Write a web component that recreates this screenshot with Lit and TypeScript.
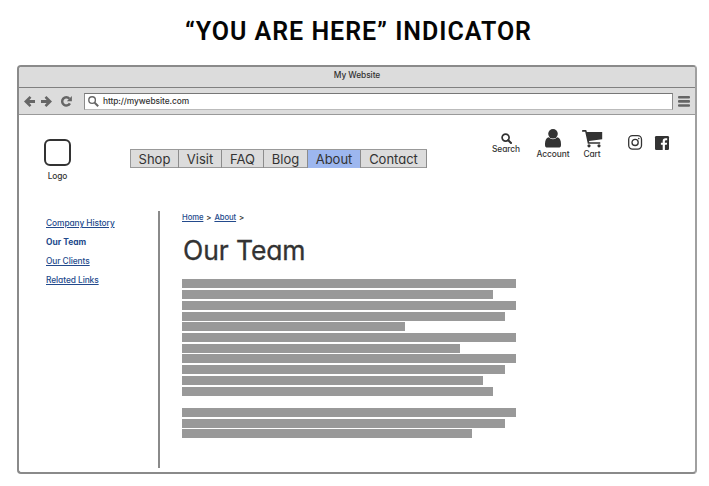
import { LitElement, html, css, svg } from "lit";
import { customElement } from "lit/decorators.js";
import { classMap } from "lit/directives/class-map.js";

const NAV = ["Shop", "Visit", "FAQ", "Blog", "About", "Contact"];
const SIDE = ["Company History", "Our Team", "Our Clients", "Related Links"];
const LINES = [334, 311, 334, 323, 223, 334, 278, 334, 323, 301, 311, 0, 334, 323, 290];

const arrow = svg`<path d="M0 5.5 5.6 0 7.4 1.8 5.4 3.9H11V7.1H5.4L7.4 9.2 5.6 11Z"/>`;

@customElement("app-root")
export class AppRoot extends LitElement {
  static styles = css`
    :host {
      display: flex;
      flex-direction: column;
      box-sizing: border-box;
      width: 709px;
      height: 486px;
      overflow: hidden;
      background: #fff;
      color: #333;
      font: 500 8.4px/12px Inter, "Liberation Sans", sans-serif;
      font-feature-settings: "cv11" 1;
      letter-spacing: -0.08px;
      white-space: nowrap;
    }
    * { box-sizing: border-box; }
    svg { display: block; overflow: visible; }
    .title {
      margin: 0;
      height: 65px;
      padding: 17px 0 0 185px;
      font: 600 25px/30px Roboto, sans-serif;
      letter-spacing: 0.98px;
      color: #050505;
    }
    .window {
      width: 680px;
      height: 409px;
      margin-left: 17px;
      border: 2px solid #8a8a8a;
      border-right-color: #a0a0a0;
      border-radius: 4px;
      overflow: hidden;
    }
    .bar {
      height: 21px;
      background: #dcdcdc;
      border-bottom: 1px solid #808080;
      text-align: center;
      line-height: 17px;
    }
    .tools {
      display: flex;
      align-items: center;
      height: 27px;
      padding: 0 5px;
      background: #dcdcdc;
      border-bottom: 1px solid #999;
      fill: #666;
    }
    .fwd { margin-left: 6px; transform: scaleX(-1); }
    .reload { margin-left: 9px; }
    .url {
      display: flex;
      align-items: center;
      width: 589px;
      height: 17px;
      margin: 0 5px 0 12px;
      padding-left: 3px;
      gap: 4px;
      background: #fff;
      border: 1px solid #8c8c8c;
      border-top-color: #777;
      border-bottom-color: #bbb;
    }
    .page { display: grid; grid-template-columns: 139px 1fr; grid-template-rows: 96px 1fr; height: 357px; }
    .head { grid-column: 1 / 3; display: flex; align-items: flex-start; }
    .logo { width: 27px; margin: 24px 0 0 25px; display: flex; flex-direction: column; align-items: center; gap: 4px; }
    .logobox { width: 27px; height: 27px; border: 2px solid #333; border-radius: 6px; }
    .nav {
      display: grid;
      grid-template-columns: 48px 43px 42px 44px 53px 66px;
      margin: 34px 0 0 59px;
      height: 19px;
      border: 1px solid #999;
      border-right: 0;
      background: #dcdcdc;
      font-size: 13px;
      font-weight: 400;
      letter-spacing: 0;
      line-height: 18px;
      text-align: center;
      width: 297px;
    }
    .tab { border-right: 1px solid #8c8c8c; }
    .tab.on { background: #9db7ef; }
    .action { display: flex; flex-direction: column; align-items: center; fill: #333; }
    .search { width: 30px; margin: 18px 0 0 64px; }
    .search span { margin-top: -1px; }
    .account { width: 34px; margin: 14px 0 0 15px; }
    .cart { width: 22px; margin: 15px 0 0 11px; }
    .insta { margin: 20px 0 0 25px; }
    .fb { margin: 21px 0 0 13px; }
    .side {
      display: flex;
      flex-direction: column;
      align-items: flex-start;
      height: 257px;
      width: 141px;
      padding: 6px 0 0 27px;
      gap: 7px;
      border-right: 2px solid #8a8a8a;
      color: #234a8c;
    }
    .link { color: #234a8c; text-decoration: underline; text-underline-offset: 1px; }
    .here { font-weight: 700; letter-spacing: 0.05px; }
    .main { padding-left: 24px; }
    .crumbs { display: flex; font-size: 7.7px; height: 13px; padding-top: 1px; }
    .sep { width: 11px; text-align: center; font-weight: 700; }
    .h { margin: 9px 0 0 1px; font-weight: 400; font-size: 26.5px; line-height: 34px; letter-spacing: -0.1px; -webkit-text-stroke: 0.3px #333; }
    .lines { display: grid; grid-auto-rows: 9px; row-gap: 1.73px; padding-top: 12.4px; }
    .line { background: #999; }
  `;

  render() {
    return html`
      <h1 class="title">“YOU ARE HERE” INDICATOR</h1>
      <div class="window">
        <div class="bar">My Website</div>
        <div class="tools">
          <svg width="11" height="11">${arrow}</svg>
          <svg class="fwd" width="11" height="11">${arrow}</svg>
          <svg class="reload" width="11" height="11" viewBox="0 0 11 11">
            <path d="M8.9 7.3A4.1 4.1 0 1 1 8.4 2.7" fill="none" stroke="#666" stroke-width="2.5"/>
            <path d="M10.9 0V5.2H5.8Z"/>
          </svg>
          <div class="url">
            <svg width="11" height="11" viewBox="0 0 11 11" fill="none" stroke="#666">
              <circle cx="4.1" cy="4.1" r="3.3" stroke-width="1.4"/>
              <path d="M6.7 6.7 10.2 10.2" stroke-width="2"/>
            </svg>
            <span>http://mywebsite.com</span>
          </div>
          <svg width="12" height="11"><rect width="12" height="2.6" rx="1"/><rect y="4.1" width="12" height="2.6" rx="1"/><rect y="8.2" width="12" height="2.6" rx="1"/></svg>
        </div>
        <div class="page">
          <div class="head">
            <div class="logo"><div class="logobox"></div><span>Logo</span></div>
            <nav class="nav">
              ${NAV.map((t) => html`<div class=${classMap({ tab: true, on: t === "About" })}>${t}</div>`)}
            </nav>
            <div class="action search">
              <svg width="11" height="11" viewBox="0 0 11 11" fill="none" stroke="#333">
                <circle cx="4.6" cy="4.6" r="3.5" stroke-width="1.7"/>
                <path d="M7.2 7.2 10 10" stroke-width="2.1" stroke-linecap="round"/>
              </svg>
              <span>Search</span>
            </div>
            <div class="action account">
              <svg width="16" height="19" viewBox="0 0 16 19">
                <circle cx="8" cy="4.8" r="4.8"/>
                <path d="M3.6 8.2Q8 12.4 12.4 8.2Q16 9.4 16 15V16Q16 18.6 13.5 18.6H2.5Q0 18.6 0 16V15Q0 9.4 3.6 8.2Z"/>
              </svg>
              <span>Account</span>
            </div>
            <div class="action cart">
              <svg width="21" height="18" viewBox="0 0 21 18">
                <path d="M0 .9Q0 .1.8.1H4.2L4.9 1.9H20.2V9.2L7 10.9 7.3 12.3H18.2V13.8H5.8L3.2 1.8H.8Q0 1.8 0 .9Z"/>
                <circle cx="7" cy="15.8" r="1.6"/><circle cx="17" cy="15.8" r="1.6"/>
              </svg>
              <span>Cart</span>
            </div>
            <svg class="insta" width="14" height="15" viewBox="0 0 14 15" fill="none" stroke="#333" stroke-width="1.3">
              <rect x=".7" y=".7" width="12.8" height="13.4" rx="3.8"/>
              <circle cx="7.1" cy="7.4" r="3.1"/>
              <circle cx="10.8" cy="3.6" r=".8" fill="#333" stroke="none"/>
            </svg>
            <svg class="fb" width="14" height="14" viewBox="0 0 14 14">
              <rect width="14" height="14" rx="1.2" fill="#333"/>
              <path d="M7.7 14V8.8H5.9V6.7H7.7V5.1Q7.7 2.3 10.5 2.3H12.2V4.3H11Q9.9 4.3 9.9 5.3V6.7H12.1L11.8 8.8H9.9V14Z" fill="#fff"/>
            </svg>
          </div>
          <div class="side">
            ${SIDE.map((t) => html`<span class=${t === "Our Team" ? "here" : "link"}>${t}</span>`)}
          </div>
          <div class="main">
            <div class="crumbs"><span class="link">Home</span><span class="sep">&gt;</span><span class="link">About</span><span class="sep">&gt;</span></div>
            <h2 class="h">Our Team</h2>
            <div class="lines">${LINES.map((w) => html`<div class="line" style="width:${w}px"></div>`)}</div>
          </div>
        </div>
      </div>
    `;
  }
}
